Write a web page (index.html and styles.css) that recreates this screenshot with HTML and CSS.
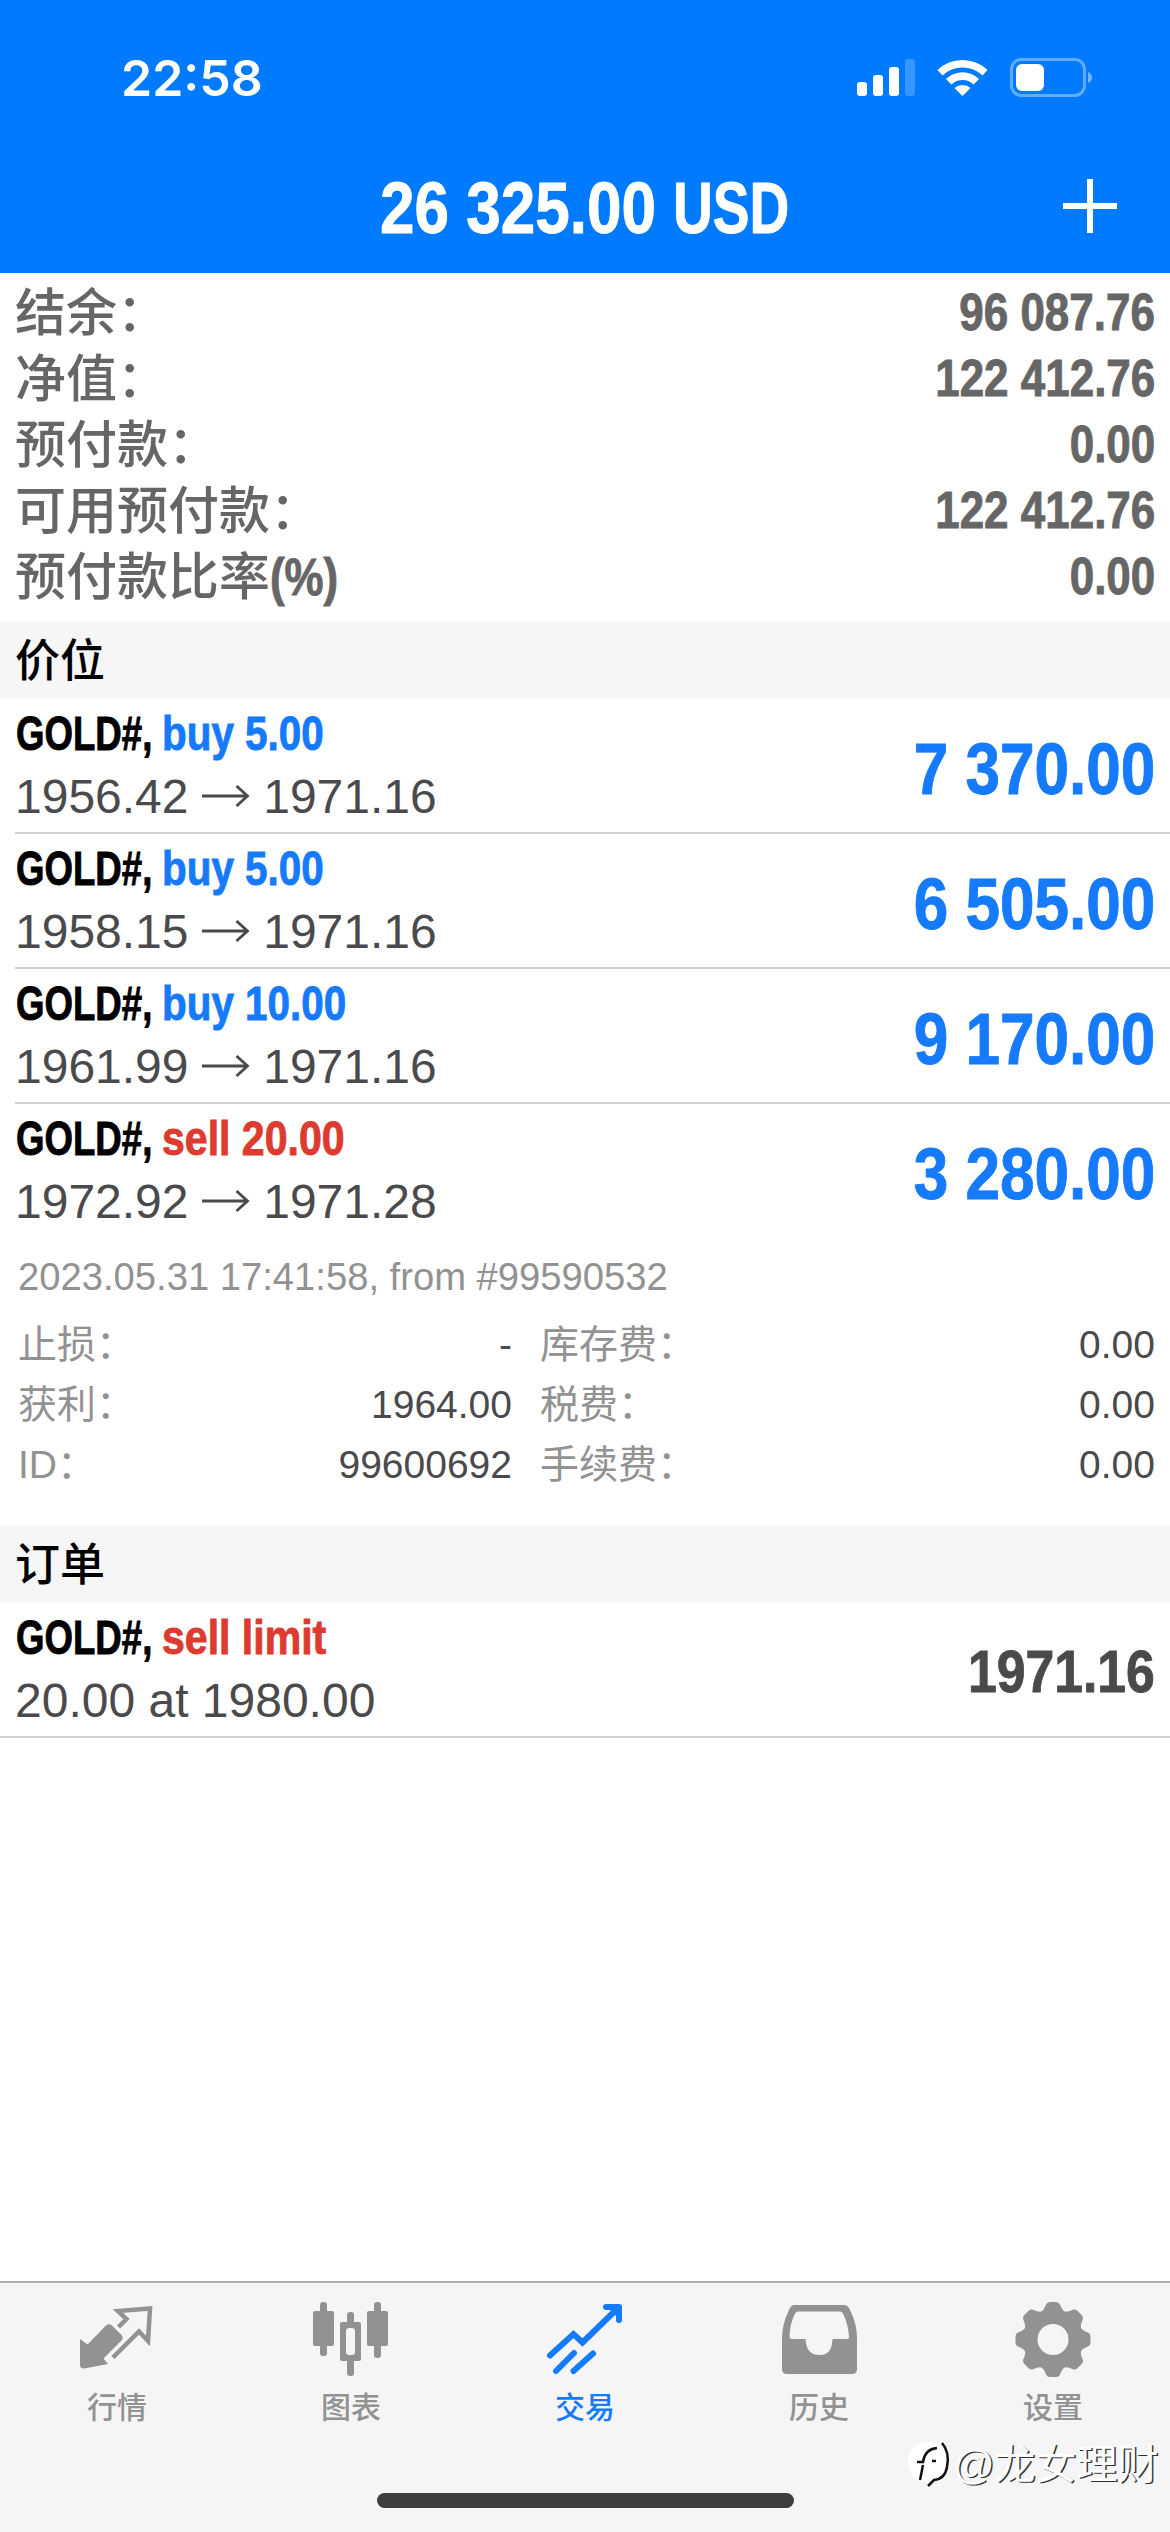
FILE: index.html
```html
<!DOCTYPE html>
<html lang="zh-CN">
<head>
<meta charset="utf-8">
<title>交易</title>
<link rel="stylesheet" href="styles.css">
</head>
<body>
<svg width="0" height="0" class="defs">
  <symbol id="arrow" viewBox="0 0 48 22"><path d="M0 11H45M34.500 1L45.500 11L34.500 21" fill="none" stroke="currentColor" stroke-width="2.800"/></symbol>
</svg>
<div class="app">
  <header class="top">
    <div class="status">
      <span class="clock">22:58</span>
      <svg class="status-icons" width="240" height="42" viewBox="0 0 240 42">
        <g fill="#fff">
          <rect x="0" y="24" width="10" height="14" rx="3"/>
          <rect x="16" y="17" width="10" height="21" rx="3"/>
          <rect x="32" y="9" width="10" height="29" rx="3"/>
          <rect x="48" y="1" width="10" height="37" rx="3" opacity=".22"/>
          <path d="M80.500 12 A36 36 0 0 1 130.500 12 L125.500 17.500 A29 29 0 0 0 85.500 17.500Z"/>
          <path d="M89 21 A23.500 23.500 0 0 1 122 21 L116.500 26.500 A16 16 0 0 0 94.500 26.500Z"/>
          <path d="M97.500 30 A12 12 0 0 1 113.500 30 L105.500 38Z"/>
          <rect x="159" y="6" width="28" height="27" rx="6"/>
          <path d="M231 14 V25 Q235 23.500 235 19.500 Q235 15.500 231 14Z" opacity=".45"/>
        </g>
        <rect x="154.500" y="1.500" width="73" height="36" rx="10" fill="none" stroke="#fff" stroke-opacity=".38" stroke-width="3"/>
      </svg>
    </div>
    <div class="nav">
      <h1 class="title"><span class="amount">26 325.00</span> <span class="currency">USD</span></h1>
      <svg class="plus" width="56" height="56" viewBox="0 0 56 56"><path d="M29 -1V53M2 26H56" stroke="#fff" stroke-width="6"/></svg>
    </div>
  </header>

  <main class="content">
    <dl class="summary">
      <div class="sum-row"><dt>结余：</dt><dd>96 087.76</dd></div>
      <div class="sum-row"><dt>净值：</dt><dd>122 412.76</dd></div>
      <div class="sum-row"><dt>预付款：</dt><dd>0.00</dd></div>
      <div class="sum-row"><dt>可用预付款：</dt><dd>122 412.76</dd></div>
      <div class="sum-row"><dt>预付款比率<span class="unit">(%)</span></dt><dd>0.00</dd></div>
    </dl>

    <h2 class="section">价位</h2>
    <ul class="list">
      <li class="item"><div class="info"><div class="name"><span class="sym">GOLD#,</span> <span class="buy">buy 5.00</span></div><div class="price">1956.42 <svg class="arrow"><use href="#arrow"/></svg> 1971.16</div></div><div class="profit">7 370.00</div></li>
      <li class="item"><div class="info"><div class="name"><span class="sym">GOLD#,</span> <span class="buy">buy 5.00</span></div><div class="price">1958.15 <svg class="arrow"><use href="#arrow"/></svg> 1971.16</div></div><div class="profit">6 505.00</div></li>
      <li class="item"><div class="info"><div class="name"><span class="sym">GOLD#,</span> <span class="buy">buy 10.00</span></div><div class="price">1961.99 <svg class="arrow"><use href="#arrow"/></svg> 1971.16</div></div><div class="profit">9 170.00</div></li>
      <li class="item last"><div class="info"><div class="name"><span class="sym">GOLD#,</span> <span class="sell">sell 20.00</span></div><div class="price">1972.92 <svg class="arrow"><use href="#arrow"/></svg> 1971.28</div></div><div class="profit">3 280.00</div></li>
    </ul>

    <div class="details">
      <div class="opened">2023.05.31 17:41:58, from #99590532</div>
      <div class="grid">
        <span class="label">止损：</span><span class="value">-</span><span class="label second">库存费：</span><span class="value">0.00</span>
        <span class="label">获利：</span><span class="value">1964.00</span><span class="label second">税费：</span><span class="value">0.00</span>
        <span class="label">ID：</span><span class="value">99600692</span><span class="label second">手续费：</span><span class="value">0.00</span>
      </div>
    </div>

    <h2 class="section">订单</h2>
    <ul class="list full">
      <li class="item"><div class="info"><div class="name"><span class="sym">GOLD#,</span> <span class="sell">sell limit</span></div><div class="price">20.00 at 1980.00</div></div><div class="market">1971.16</div></li>
    </ul>
  </main>

  <nav class="tabs">
    <a class="tab">
      <svg class="icon" width="78" height="78" viewBox="0 0 78 78">
        <path d="M2 43 L9.500 48.500 L28 29.500 Q31 27 34 29.500 L43 38.500 Q46 41.500 43.500 44.500 L25.500 62.500 L30 68 L6 72.500 Q2 72.500 2 69Z" fill="#929292"/>
        <path d="M40.500 31 L48.500 23 L40 15 L72 12.500 L70 45 L61 35.500 L35 61.500" fill="none" stroke="#929292" stroke-width="4.500"/>
      </svg>
      <span>行情</span>
    </a>
    <a class="tab">
      <svg class="icon" width="78" height="78" viewBox="0 0 78 78" fill="#929292">
        <rect x="1" y="15" width="21" height="35" rx="2"/><rect x="8" y="6" width="7" height="54" rx="3"/>
        <rect x="55" y="15" width="21" height="35" rx="2"/><rect x="62" y="6" width="7" height="56" rx="3"/>
        <rect x="35" y="16" width="7" height="64" rx="3"/>
        <rect x="28" y="26" width="21" height="39" rx="2"/>
        <rect x="34" y="32" width="9" height="27" rx="3" fill="#f5f5f5"/>
      </svg>
      <span>图表</span>
    </a>
    <a class="tab active">
      <svg class="icon" width="78" height="78" viewBox="0 0 78 78" fill="none" stroke="#157afb" stroke-width="6" stroke-linecap="round" stroke-linejoin="miter">
        <path d="M4 59.500 L27.500 38 L36.500 46.500 L72 12"/><path d="M60 11 H73 V24" stroke-linejoin="round"/>
        <path d="M62 12H72V22Z" fill="#157afb" stroke="none"/>
        <path d="M10 75 L28 57M27.500 75 L47 57.500"/>
      </svg>
      <span>交易</span>
    </a>
    <a class="tab">
      <svg class="icon" width="78" height="78" viewBox="0 0 78 78">
        <path fill="#929292" fill-rule="evenodd" d="M14 9 H64 Q68 9 70 14 Q77 28 77 42 V73 Q77 78 72 78 H7 Q2 78 2 73 V42 Q2 28 9 14 Q11 9 14 9Z M18 15.500 Q15.500 16 14.500 18.500 Q10 28 9.500 40 Q9.500 43 12 43 H25.500 C26 53 30 59 39.500 59 S52 53 52.500 43 H67 Q69.500 43 69 40 Q68 28 63.500 18.500 Q62.500 16 60 15.500Z"/>
      </svg>
      <span>历史</span>
    </a>
    <a class="tab">
      <svg class="icon" width="78" height="78" viewBox="0 0 78 78">
        <g fill="#929292" transform="translate(39 43.500)">
          <circle r="29"/>
          <path id="tooth" d="M-13 -27 Q-9 -29 -7 -35 Q-6 -37.500 -3 -37.500 H3 Q6 -37.500 7 -35 Q9 -29 13 -27 V-15 H-13Z"/>
          <use href="#tooth" transform="rotate(45)"/><use href="#tooth" transform="rotate(90)"/><use href="#tooth" transform="rotate(135)"/><use href="#tooth" transform="rotate(180)"/><use href="#tooth" transform="rotate(225)"/><use href="#tooth" transform="rotate(270)"/><use href="#tooth" transform="rotate(315)"/>
          <circle r="15.500" fill="#f5f5f5"/>
        </g>
      </svg>
      <span>设置</span>
    </a>
    <div class="home-bar"></div>
    <div class="watermark">
      <svg width="46" height="50" viewBox="0 0 46 50">
        <circle cx="21" cy="22" r="20.500" fill="#fff"/>
        <path d="M10 22 H16 Q18 9 30 8 M16 25 L13 40 M25 21H29" fill="none" stroke="#111" stroke-width="2.500"/>
        <path d="M35 3 Q43 12 40 27 Q38 39 27 40 L21 46" fill="none" stroke="#111" stroke-width="2.500"/>
      </svg>
      <span>@龙女理财</span>
    </div>
  </nav>
</div>
</body>
</html>
```
FILE: styles.css
```css
* { box-sizing: border-box; margin: 0; padding: 0; }

body {
  width: 1170px;
  background: #fff;
  font-family: "Liberation Sans", "Noto Sans CJK SC", sans-serif;
  color: #4a4a4c;
}

.defs { display: none; }
.app { display: flex; flex-direction: column; height: 2532px; }

/* Condensed bold face: the regular bold squeezed horizontally */
.amount, .currency, .sum-row dd, .unit, .sym, .buy, .sell, .profit, .market {
  display: inline-block;
  font-weight: 700;
  white-space: nowrap;
  transform-origin: left center;
  -webkit-text-stroke: 0.9px currentColor;
}

.top { height: 273px; background: #007aff; color: #fff; flex: none; }
.status { display: flex; justify-content: space-between; height: 143px; padding: 58px 73px 0 121px; }
.clock { margin-top: -1px; font: 600 50px/42px Inter, sans-serif; }
.nav { display: grid; grid-template-columns: 1fr auto 1fr; align-items: center; height: 130px; padding: 0 53px; }
.title { display: flex; grid-column: 2; font-size: 73px; line-height: 130px; }
.amount { width: 293px; transform: scaleX(0.85); }
.currency { width: 118px; transform: scaleX(0.755); }
.plus { justify-self: end; overflow: visible; }

.content { flex: 1; }
.summary { height: 348px; padding: 7px 15px 0; color: #666; }
.sum-row { display: flex; justify-content: space-between; font-size: 51px; line-height: 66px; }
.sum-row dt { padding-top: 1px; margin-bottom: -1px; font-weight: 500; }
.sum-row dd { transform: scaleX(0.862); transform-origin: right center; }
.unit { transform: scaleX(0.86); }

.section { height: 78px; padding-left: 15px; background: #f6f6f6; color: #000; font-size: 45px; font-weight: 500; line-height: 81px; }

.list { list-style: none; padding-left: 15px; }
.list.full { padding-left: 0; }
.full .item { padding-left: 15px; }
.item { display: flex; justify-content: space-between; height: 135px; padding: 5px 15px 0 0; border-bottom: 2px solid #d0d0d3; }
.item.last { border-bottom-color: transparent; }
.name { display: flex; padding-left: 1px; font-size: 48px; line-height: 60px; white-space: nowrap; }
.sym { width: 145.5px; color: #000; transform: scaleX(0.763); }
.buy { color: #157afb; transform: scaleX(0.842); }
.sell { color: #dd3b30; transform: scaleX(0.855); }
.price { font-size: 48px; line-height: 66px; }
.arrow { width: 48px; height: 22px; vertical-align: 6px; }
.profit, .market { transform: scaleX(0.862); transform-origin: right center; }
.profit { color: #157afb; font-size: 72px; line-height: 130px; }
.market { font-size: 60px; line-height: 128px; }

.details { height: 286px; padding: 8px 15px 0 18px; font-size: 39px; color: #929292; }
.opened { font-size: 38.2px; line-height: 60px; }
.grid { display: grid; grid-template-columns: 140px 354px 176px 1fr; grid-auto-rows: 60px; line-height: 60px; padding-top: 8px; white-space: nowrap; }
.grid .second { padding-left: 28px; }
.value { color: #4a4a4c; text-align: right; }

.tabs { position: relative; display: flex; flex: none; height: 251px; background: #f5f5f5; border-top: 2px solid #adadad; }
.tab { display: flex; flex: 1; flex-direction: column; align-items: center; padding-top: 13px; color: #929292; font-size: 30px; font-weight: 500; line-height: 40px; }
.tab.active { color: #157afb; }
.icon { overflow: visible; margin-bottom: 14px; }
.home-bar { position: absolute; left: 377px; bottom: 24px; width: 417px; height: 15px; border-radius: 8px; background: #3e3e3e; }
.watermark { position: absolute; left: 907px; top: 157px; display: flex; align-items: center; color: #fff; font-size: 41px; line-height: 48px; white-space: nowrap; text-shadow: 1.5px 1px 0 #333; }
```
